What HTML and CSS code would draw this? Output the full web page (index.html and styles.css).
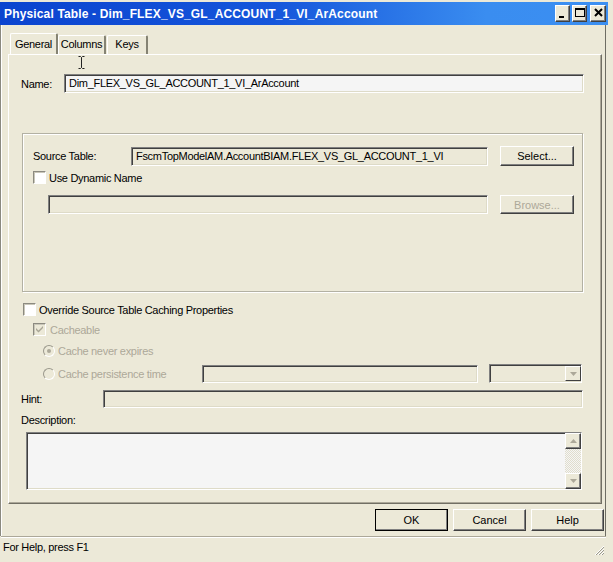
FILE: index.html
```html
<!DOCTYPE html>
<html lang="en">
<head>
    <meta charset="UTF-8">
    <title>Physical Table - Dim_FLEX_VS_GL_ACCOUNT_1_VI_ArAccount</title>
    <link rel="stylesheet" href="styles.css">
</head>
<body>
<div class="window">
    <div class="titlebar">
        <span class="title">Physical Table - Dim_FLEX_VS_GL_ACCOUNT_1_VI_ArAccount</span>
        <div class="caption-btns">
            <span class="cbtn"><svg width="13" height="15" viewBox="0 0 13 15"><rect x="3" y="10" width="5" height="2" fill="#000"/></svg></span>
            <span class="cbtn"><svg width="13" height="15" viewBox="0 0 13 15"><rect x="2.5" y="2.5" width="9" height="8" fill="none" stroke="#000"/><rect x="2" y="2" width="10" height="2" fill="#000"/></svg></span>
            <span class="cbtn close"><svg width="13" height="15" viewBox="0 0 13 15"><path d="M3 3 L10 10 M10 3 L3 10" stroke="#000" stroke-width="2"/></svg></span>
        </div>
    </div>

    <div class="frame">
        <div class="tabs">
            <div class="tab active">General</div>
            <div class="tab">Columns</div>
            <div class="tab keys">Keys</div>
        </div>

        <div class="page">
            <div class="name-row">
                <span class="name-label">Name:</span>
                <div class="field name-field">Dim_FLEX_VS_GL_ACCOUNT_1_VI_ArAccount</div>
            </div>

            <div class="group">
                <div class="src-row">
                    <span class="src-label">Source Table:</span>
                    <div class="field ro src-field">FscmTopModelAM.AccountBIAM.FLEX_VS_GL_ACCOUNT_1_VI</div>
                    <button class="btn">Select...</button>
                </div>
                <div class="check-row dyn-check">
                    <span class="chk"></span>Use Dynamic Name
                </div>
                <div class="dyn-row">
                    <div class="field ro dyn-field"></div>
                    <button class="btn disabled">Browse...</button>
                </div>
            </div>

            <div class="check-row override">
                <span class="chk"></span>Override Source Table Caching Properties
            </div>
            <div class="check-row cacheable disabled-text">
                <span class="chk checked-off"><svg width="11" height="11" viewBox="0 0 11 11"><path d="M2 4 L4.5 6.5 L9 2 L9 4 L4.5 8.5 L2 6 Z" fill="#a9a696"/></svg></span>Cacheable
            </div>
            <div class="radio-row never disabled-text">
                <span class="radio on"></span>Cache never expires
            </div>
            <div class="radio-row persist disabled-text">
                <span class="radio"></span><span class="persist-label">Cache persistence time</span>
                <div class="field ro persist-field"></div>
                <div class="field ro combo">
                    <span class="combo-btn"><svg width="7" height="4" viewBox="0 0 7 4"><path d="M0 0 H7 L3.5 4 Z" fill="#aca899"/></svg></span>
                </div>
            </div>

            <div class="hint-row">
                <span class="hint-label">Hint:</span>
                <div class="field ro hint-field"></div>
            </div>
            <div class="desc-label">Description:</div>
            <div class="field desc-box">
                <div class="vscroll">
                    <span class="sbtn"><svg width="7" height="4" viewBox="0 0 7 4"><path d="M0 4 H7 L3.5 0 Z" fill="#aca899"/></svg></span>
                    <span class="track"></span>
                    <span class="sbtn"><svg width="7" height="4" viewBox="0 0 7 4"><path d="M0 0 H7 L3.5 4 Z" fill="#aca899"/></svg></span>
                </div>
            </div>
        </div>

        <div class="btn-row">
            <button class="btn dlg default">OK</button>
            <button class="btn dlg">Cancel</button>
            <button class="btn dlg">Help</button>
        </div>
    </div>

    <div class="statusbar">
        <span>For Help, press F1</span>
        <svg class="grip" width="11" height="11" viewBox="0 0 11 11">
            <path d="M10 1 L1 10 M10 4 L4 10 M10 7 L7 10" stroke="#fff" stroke-width="1"/>
            <path d="M10 2 L2 10 M10 5 L5 10 M10 8 L8 10" stroke="#9c9a8e" stroke-width="1"/>
        </svg>
    </div>

    <!-- mouse pointer left over the Columns tab -->
    <svg class="ibeam" width="7" height="13" viewBox="0 0 7 13">
        <path d="M0.5 0.5 H2.5 L3.5 1.5 L4.5 0.5 H6.5 M3.5 1.5 V11.5 M0.5 12.5 H2.5 L3.5 11.5 L4.5 12.5 H6.5" stroke="#222" fill="none"/>
    </svg>
</div>
</body>
</html>
```

FILE: styles.css
```css
* { box-sizing: border-box; margin: 0; padding: 0; }
body { background: #ece9d8; font-family: "Liberation Sans", Arial, sans-serif; font-size: 11px; letter-spacing: -0.3px; color: #000; }

.window { position: relative; width: 608px; height: 562px; padding-top: 2px; }

/* title bar */
.titlebar {
    height: 23px; display: flex; align-items: center; justify-content: space-between;
    background: linear-gradient(to right, #0b44cf 0%, #1556db 45%, #3a8df0 80%, #3b8ff2 100%);
    padding: 0 2px 0 4px;
}
.title { color: #fff; font-weight: bold; font-size: 12px; letter-spacing: 0.15px; white-space: nowrap; }
.caption-btns { display: flex; gap: 2px; }
.cbtn {
    width: 15px; height: 17px; background: #ece9d8;
    border: 1px solid; border-color: #fff #404040 #404040 #fff;
    box-shadow: inset -1px -1px #808080;
    display: flex; align-items: center; justify-content: center;
}
.cbtn.close { margin-left: 1px; width: 16px; }

/* main frame */
.frame {
    width: 606px; height: 511px; padding-top: 8px;
    border-left: 1px solid #8a897f; border-right: 1px solid #6e6d63;
    box-shadow: inset 1px 0 #fff;
}

.tabs { display: flex; align-items: flex-end; height: 21px; padding-left: 10px; }
.tab {
    height: 19px; width: 48px; text-align: center; line-height: 17px;
    border-top: 1px solid #fff; border-left: 1px solid #fff; border-right: 2px solid #858373;
    border-radius: 2px 2px 0 0;
}
.tab.active { height: 21px; margin-left: -1px; line-height: 20px; }
.tab.keys { width: 41px; margin-left: 1px; }

.page {
    margin-left: 7px; width: 594px; height: 450px;
    border: 1px solid; border-color: #fff #716f64 #716f64 #fff;
    box-shadow: inset -1px -1px #aca899;
    padding-top: 19px;
}

/* sunken edit field */
.field {
    background: #f5f5f5; height: 19px; line-height: 17px; padding-left: 4px; white-space: nowrap; overflow: hidden;
    border: 1px solid; border-color: #808080 #fff #fff #808080;
    box-shadow: inset 1px 1px #404040, inset -1px -1px #dedbc8;
}
.field.ro { background: #ece9d8; }

.name-row { display: flex; align-items: center; padding-left: 12px; }
.name-label { width: 43px; }
.name-field { width: 520px; }

.group {
    margin: 40px 0 0 13px; width: 561px; height: 159px;
    border: 1px solid #b3b1a3; box-shadow: inset 1px 1px #fff, 1px 1px #fff;
    padding: 12px 0 0 10px;
}
.src-row, .dyn-row { display: flex; align-items: center; }
.src-label { width: 98px; }
.src-field { width: 357px; }
.dyn-row { margin-top: 11px; padding-left: 15px; }
.dyn-field { width: 440px; }

.btn {
    font: inherit; color: #000; background: #ece9d8; height: 20px; width: 74px; margin-left: 12px;
    border: 1px solid; border-color: #fff #404040 #404040 #fff;
    box-shadow: inset -1px -1px #808080;
}
.btn.disabled { color: #aca899; height: 19px; }

.check-row { display: flex; align-items: center; height: 13px; }
.chk {
    width: 13px; height: 13px; margin-right: 3px; background: #fff;
    border: 1px solid; border-color: #8c8a80 #fff #fff #8c8a80;
    box-shadow: inset 1px 1px #c9c7b9;
    display: flex; align-items: center; justify-content: center;
}
.chk.checked-off { background: #ece9d8; margin-right: 4px; }
.dyn-check { margin-top: 5px; }
.override { margin: 11px 0 0 14px; }
.cacheable { margin: 7px 0 0 24px; }
.disabled-text { color: #aca899; }

.radio-row { display: flex; align-items: center; }
.radio {
    width: 12px; height: 12px; border-radius: 50%; margin-right: 3px; position: relative;
    border: 1px solid; border-color: #9a988c #fff #fff #9a988c; background: #ece9d8;
}
.radio.on::after {
    content: ""; position: absolute; left: 3px; top: 3px; width: 4px; height: 4px;
    border-radius: 50%; background: #aca899;
}
.never { margin: 9px 0 0 34px; height: 12px; }
.persist { margin: 7px 0 0 34px; height: 19px; }
.persist-label { width: 144px; }
.persist-field { width: 276px; height: 18px; }
.combo { width: 93px; margin-left: 11px; position: relative; }
.combo-btn {
    position: absolute; right: 0; top: 1px; width: 16px; height: 15px; background: #ece9d8;
    border: 1px solid; border-color: #fff #404040 #404040 #fff;
    display: flex; align-items: center; justify-content: center;
}

.hint-row { display: flex; align-items: center; margin-top: 7px; padding-left: 12px; }
.hint-label { width: 82px; }
.hint-field { width: 480px; height: 18px; }

.desc-label { margin: 6px 0 0 12px; height: 13px; line-height: 13px; }
.desc-box { margin: 5px 0 0 17px; width: 556px; height: 58px; position: relative; padding: 0; }
.vscroll {
    position: absolute; right: 0; top: 0; bottom: 0; width: 16px;
    display: flex; flex-direction: column;
}
.sbtn {
    height: 16px; background: #ece9d8;
    border: 1px solid; border-color: #fff #404040 #404040 #fff;
    box-shadow: inset -1px -1px #808080;
    display: flex; align-items: center; justify-content: center;
}
.track {
    flex: 1;
    background: repeating-conic-gradient(#f5f5f5 0 25%, #e0ddcc 0 50%) 0 0 / 2px 2px;
}

.btn-row { display: flex; justify-content: flex-end; gap: 5px; margin-top: 5px; padding-right: 1px; }
.btn.dlg { width: 73px; height: 22px; margin-left: 0; }
.btn.default { outline: 1px solid #000; outline-offset: -1px; border-color: #fff #404040 #404040 #fff; }

/* status bar */
.statusbar {
    position: relative; height: 21px; margin-left: 1px; width: 605px;
    border-top: 1px solid #aca899; box-shadow: inset 0 1px #fff;
    padding: 4px 0 0 2px; font-size: 11px;
}
.grip { position: absolute; right: 1px; bottom: 1px; }

.ibeam { position: absolute; left: 78px; top: 56px; }
```
